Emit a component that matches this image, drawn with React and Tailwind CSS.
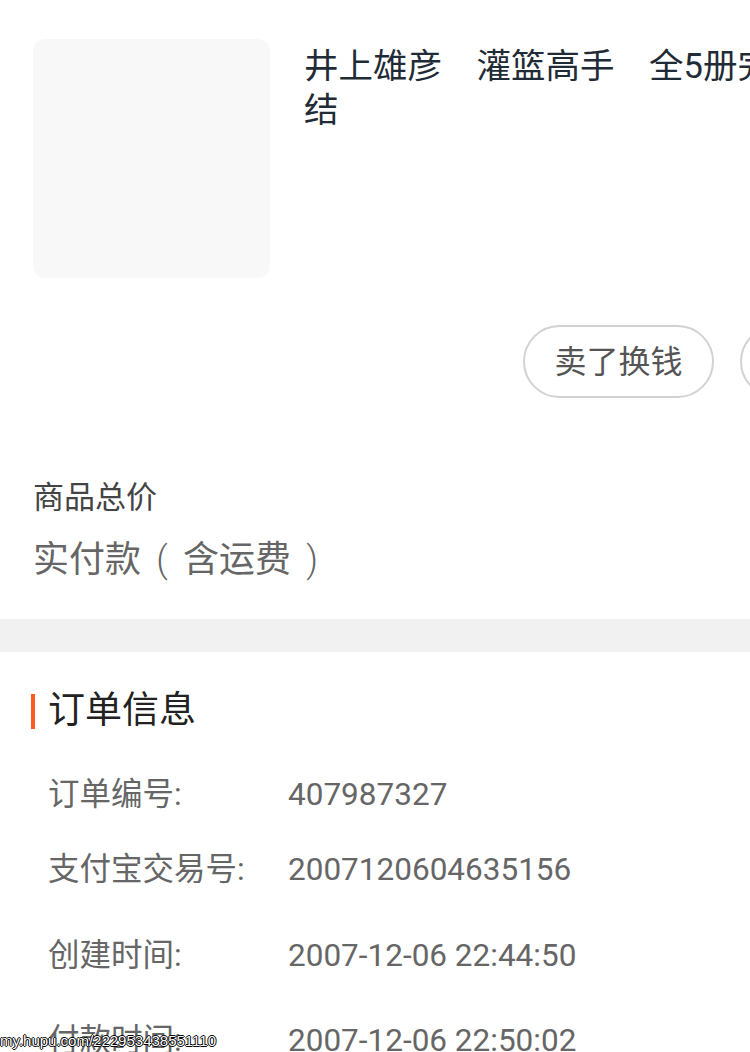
import React from "react";

const rows = [
  { label: "订单编号:", value: "407987327", mt: "mt-[40px]" },
  { label: "支付宝交易号:", value: "2007120604635156", mt: "mt-[31px]" },
  { label: "创建时间:", value: "2007-12-06 22:44:50", mt: "mt-[42px]" },
  { label: "付款时间:", value: "2007-12-06 22:50:02", mt: "mt-[41px]" },
];

function App() {
  return (
    <div className="relative w-[750px] h-[1052px] overflow-hidden bg-white font-['Roboto','Noto_Sans_CJK_SC',sans-serif]">
      {/* 商品 */}
      <div className="flex pt-[39px] pl-[33px]">
        <div className="w-[237px] h-[239px] shrink-0 rounded-[12px] bg-[#f8f8f8]" />
        <div className="ml-[34px] mt-[5px] w-[475px] shrink-0 text-[34.5px] leading-[44px] text-[#1f2b36]">
          井上雄彦　灌篮高手　全5册完结
        </div>
      </div>

      <div className="flex gap-[26px] mt-[47px] pl-[523px]">
        <button className="w-[191px] h-[73px] shrink-0 rounded-full border-2 border-[#d2d2d2] text-[32px] text-[#555]">
          卖了换钱
        </button>
        <button className="w-[191px] h-[73px] shrink-0 rounded-full border-2 border-[#d2d2d2] text-[32px] text-[#555]">
          确认收货
        </button>
      </div>

      {/* 价格 */}
      <div className="px-[33px] mt-[80px]">
        <div className="text-[31px] leading-[40px] text-[#444]">商品总价</div>
        <div className="mt-[20px] flex text-[36px] leading-[44px] text-[#666]">
          <span>实付款</span>
          <span className="w-[42px] flex justify-center font-light">(</span>
          <span>含运费</span>
          <span className="w-[42px] flex justify-center font-light">)</span>
        </div>
      </div>

      <div className="mt-[37px] h-[33px] bg-[#f1f1f1]" />

      {/* 订单信息 */}
      <div className="mt-[37px] flex items-center pl-[31px]">
        <div className="w-[4px] h-[35px] bg-[#ff5a1f]" />
        <div className="ml-[13px] text-[37px] leading-[44px] text-[#222]">订单信息</div>
      </div>

      {rows.map((row) => (
        <div key={row.label} className={`flex pl-[48px] text-[31.5px] leading-[44px] text-[#666] ${row.mt}`}>
          <div className="w-[240px] shrink-0">{row.label}</div>
          <div className="whitespace-nowrap">{row.value}</div>
        </div>
      ))}

      <div className="absolute left-0 bottom-[2px] font-['Liberation_Sans',sans-serif] text-[15px] leading-[18px] text-white [text-shadow:1px_0_0_#000,-1px_0_0_#000,0_1px_0_#000,0_-1px_0_#000]">
        my.hupu.com/222953438551110
      </div>
    </div>
  );
}

export default App;
